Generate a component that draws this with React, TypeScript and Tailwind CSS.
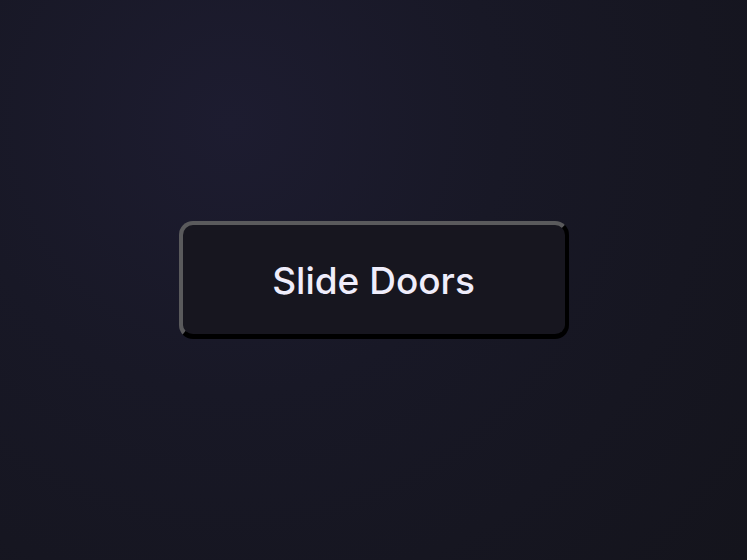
export default function App() {
  return (
    <div className="flex h-[560px] w-full items-center justify-center bg-[radial-gradient(circle_at_31%_22%,#1d1c30_0%,#181826_40%,#14141c_100%)]">
      <button
        className="flex h-[118px] w-[390px] items-center justify-center rounded-[14px] border-[4px] border-t-[#5a5a5c] border-l-[#5a5a5c] border-r-black border-b-[5px] border-b-black bg-[#17161f] pt-[2px] text-[37px] font-medium text-[#efedfb]"
        style={{ fontFamily: 'Inter, "Noto Sans", sans-serif' }}
      >
        Slide Doors
      </button>
    </div>
  );
}
